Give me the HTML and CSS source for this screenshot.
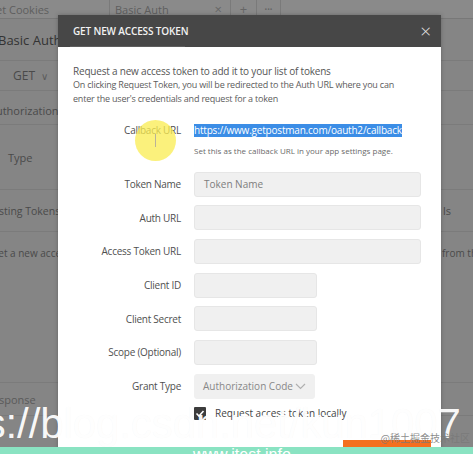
FILE: index.html
```html
<!DOCTYPE html>
<html>
<head>
<meta charset="utf-8">
<link rel="stylesheet" href="styles.css">
</head>
<body>
<div class="app">
  <div class="tabbar">
    <div class="tab tab-cookies">Get Cookies</div>
    <div class="tab tab-auth"><span>Basic Auth</span><span class="tab-x">×</span></div>
    <div class="tab tab-plus">+</div>
    <div class="tab tab-more">•••</div>
  </div>
  <div class="row row-title"><span class="lt title-text">Basic Auth</span></div>
  <div class="row row-method"><span class="method">GET <span class="chev">∨</span></span></div>
  <div class="row row-authtab"><span class="lt authtab">Authorization</span></div>
  <div class="row row-type"><span class="lt">Type</span></div>
  <div class="row row-tokens"><span class="lt">Existing Tokens</span><span class="rt">ls</span></div>
  <div class="row row-new"><span class="lt small">Get a new access token</span><span class="rt small">from the</span></div>
  <div class="row row-resp"><span class="lt">Response</span></div>
</div>

<div class="modal">
  <div class="modal-head">
    <span class="modal-title">GET NEW ACCESS TOKEN</span>
    <span class="modal-close">×</span>
  </div>
  <div class="modal-body">
    <p class="intro1">Request a new access token to add it to your list of tokens</p>
    <p class="intro2">On clicking Request Token, you will be redirected to the Auth URL where you can enter the user's credentials and request for a token</p>
    <div class="form">
      <div class="frow frow-cb">
        <label>Callback URL</label>
        <div class="cb">
          <span class="sel">https://www.getpostman.com/oauth2/callback</span>
          <span class="hint">Set this as the callback URL in your app settings page.</span>
        </div>
      </div>
      <div class="frow"><label>Token Name</label><div class="inp long ph">Token Name</div></div>
      <div class="frow"><label>Auth URL</label><div class="inp long"></div></div>
      <div class="frow"><label>Access Token URL</label><div class="inp long"></div></div>
      <div class="frow"><label>Client ID</label><div class="inp short"></div></div>
      <div class="frow"><label>Client Secret</label><div class="inp short"></div></div>
      <div class="frow"><label>Scope (Optional)</label><div class="inp short"></div></div>
      <div class="frow"><label>Grant Type</label><div class="inp select">Authorization Code <svg class="sel-chev" width="11" height="7" viewBox="0 0 11 7"><path d="M1 1l4.5 4.5L10 1" fill="none" stroke="#b0b0b0" stroke-width="1.2"/></svg></div></div>
      <div class="frow frow-check">
        <span class="check"><svg width="12" height="13" viewBox="0 0 12 13"><rect width="12" height="13" rx="1" fill="#3c3c3c"/><path d="M2.5 6.5l2.5 2.5 4.5-5" fill="none" stroke="#fff" stroke-width="1.6"/></svg></span>
        <span class="check-text">Request access token locally</span>
      </div>
    </div>
  </div>
  <div class="modal-btn"></div>
</div>

<div class="cursor-spot"></div>
<div class="ibeam"></div>

<div class="wm-big">https://blog.csdn.net/kun1007</div>
<div class="wm-juejin">@稀土掘金技术社区</div>
<div class="green-strip"><span>www.itest.info</span></div>
</body>
</html>
```

FILE: styles.css
```css
* { box-sizing: border-box; }
html, body {
  margin: 0;
  padding: 0;
}
body {
  width: 473px;
  height: 454px;
  overflow: hidden;
  position: relative;
  background: #858585;
  font-family: "Open Sans", "Noto Sans", sans-serif;
  color: #3e3e3e;
}

/* background app (dimmed) */
.app {
  display: flex;
  flex-direction: column;
  width: 473px;
}
.tabbar {
  display: flex;
  height: 19px;
  border-bottom: 1px solid #787878;
  background: #8a8a8a;
  font-size: 11px;
  color: #5e5e5e;
}
.tab {
  display: flex;
  align-items: center;
  border-right: 1px solid #7a7a7a;
  height: 18px;
}
.tab-cookies { width: 110px; padding-left: 0; text-indent: -12px; overflow: hidden; white-space: nowrap; }
.tab-auth { width: 121px; padding-left: 5px; justify-content: space-between; padding-right: 8px; }
.tab-x { font-size: 13px; color: #666; }
.tab-plus { width: 26px; justify-content: center; font-size: 13px; color: #666; }
.tab-more { width: 24px; justify-content: center; font-size: 7px; letter-spacing: 0; color: #666; }

.row {
  display: flex;
  align-items: center;
  border-bottom: 1px solid #7b7b7b;
  white-space: nowrap;
  overflow: hidden;
  font-size: 11px;
  color: #4a4a4a;
}
.lt { margin-left: -30px; }
.rt { margin-left: auto; width: 31px; overflow: hidden; }
.row-title { height: 42px; }
.title-text { margin-left: -2px; font-size: 13px; color: #333; text-indent: 0; }
.row-method { height: 30px; }
.method { margin-left: 13px; font-size: 12px; color: #4a4a4a; }
.chev { font-size: 10px; color: #5c5c5c; margin-left: 3px; }
.row-authtab { height: 34px; align-items: flex-start; padding-top: 12px; border-bottom-color: #7b7b7b; position: relative; }
.authtab { margin-left: -11px; border-bottom: 2px solid #b2633a; padding-bottom: 6px; padding-right: 40px; }
.row-type { height: 65px; }
.row-type .lt { margin-left: 8px; }
.row-tokens { height: 42px; }
.row-tokens .lt { margin-left: -15px; font-size: 10.5px; }
.row-tokens .rt { padding-left: 1px; }
.row-new { height: 151px; align-items: flex-start; padding-top: 14px; }
.row-new .lt { margin-left: -9px; }
.small { font-size: 10px; }
.row-resp { height: 33px; }
.row-resp .lt { margin-left: -14px; color: #5a5a5a; }

/* modal */
.modal {
  position: absolute;
  left: 58px;
  top: 15px;
  width: 383px;
  height: 445px;
  background: #fff;
  box-shadow: 0 0 4px rgba(0,0,0,0.25);
}
.modal-head {
  height: 32px;
  background: #474747;
  display: flex;
  align-items: center;
  justify-content: space-between;
  padding: 0 10px 0 15px;
  position: relative;
}
.modal-head::after {
  content: "";
  position: absolute;
  left: 12px;
  bottom: 0;
  width: 115px;
  height: 1px;
  background: #5e5e5e;
}
.modal-title {
  color: #f2f2f2;
  font-size: 10px;
  font-weight: 600;
  letter-spacing: -0.15px;
}
.modal-close {
  color: #e6e6e6;
  font-size: 19px;
  line-height: 1;
  font-weight: 300;
}
.modal-body {
  padding: 17px 15px 0 15px;
}
.intro1 {
  margin: 0;
  font-size: 10px;
  line-height: 14px;
  color: #555;
  letter-spacing: -0.2px;
}
.intro2 {
  margin: 0;
  font-size: 9px;
  line-height: 14px;
  color: #5c5c5c;
  width: 340px;
  letter-spacing: -0.2px;
}
.form {
  margin-top: 18px;
  display: flex;
  flex-direction: column;
  gap: 8.67px;
}
.frow {
  display: flex;
  align-items: center;
  gap: 13px;
}
.frow label {
  width: 108px;
  text-align: right;
  font-size: 10px;
  color: #505050;
  letter-spacing: -0.25px;
  white-space: nowrap;
}
.frow-cb { align-items: flex-start; margin-bottom: 7px; }
.frow-cb label { line-height: 13px; }
.cb { display: flex; flex-direction: column; }
.sel {
  background: #3b8de6;
  color: #fff;
  font-size: 10px;
  line-height: 13px;
  align-self: flex-start;
  white-space: nowrap;
  letter-spacing: -0.2px;
}
.hint {
  margin-top: 8px;
  font-size: 8px;
  line-height: 11px;
  color: #6a6a6a;
  white-space: nowrap;
}
.inp {
  height: 25px;
  background: #f0f0f0;
  border: 1px solid #e6e6e6;
  border-radius: 3px;
  font-size: 10px;
  color: #7d7d7d;
  display: flex;
  align-items: center;
  padding-left: 9px;
}
.long { width: 227px; }
.short { width: 123px; }
.select { width: 121px; border-color: #f0f0f0; justify-content: space-between; padding-right: 8px; color: #888; padding-left: 8px; }
.frow-check { gap: 9px; padding-left: 121px; margin-top: -1px; }
.check { display: flex; }
.check-text { font-size: 10px; color: #444; }
.modal-btn {
  position: absolute;
  left: 285px;
  top: 425px;
  width: 88px;
  height: 20px;
  background: #f46f1f;
}

/* overlays */
.cursor-spot {
  position: absolute;
  left: 135px;
  top: 120px;
  width: 41px;
  height: 41px;
  border-radius: 50%;
  background: rgba(250, 236, 80, 0.75);
}
.ibeam {
  position: absolute;
  left: 155px;
  top: 134px;
  width: 1px;
  height: 13px;
  background: #b9b29a;
}
.wm-big {
  position: absolute;
  left: -85px;
  top: 400px;
  font-family: "Liberation Sans", Arial, sans-serif;
  font-size: 42px;
  line-height: 48px;
  color: rgba(255,255,255,0.94);
  text-shadow: 0 0 1px rgba(0,0,0,0.04);
  white-space: nowrap;
  letter-spacing: -0.1px;
}
.wm-juejin {
  position: absolute;
  right: 3px;
  top: 430px;
  font-family: "Noto Sans CJK SC", sans-serif;
  font-size: 10px;
  color: rgba(120,120,120,0.85);
  white-space: nowrap;
}
.green-strip {
  position: absolute;
  left: 0;
  top: 447px;
  width: 473px;
  height: 7px;
  background: #8ae3c2;
  overflow: hidden;
}
.green-strip span {
  position: absolute;
  left: 193px;
  top: 0;
  font-family: "Liberation Sans", Arial, sans-serif;
  font-size: 16px;
  line-height: 16px;
  color: #fff;
}
```
